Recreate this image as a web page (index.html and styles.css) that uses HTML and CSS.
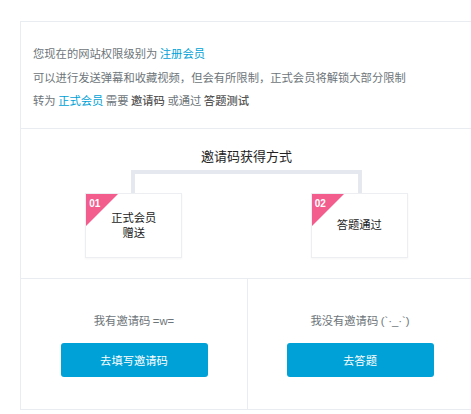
FILE: index.html
```html
<!DOCTYPE html>
<html lang="zh-CN">
<head>
<meta charset="utf-8">
<link rel="stylesheet" href="styles.css">
</head>
<body>
<div class="panel">
  <section class="intro">
    <p>您现在的网站权限级别为 <span class="link">注册会员</span></p>
    <p>可以进行发送弹幕和收藏视频，但会有所限制，正式会员将解锁大部分限制</p>
    <p>转为 <span class="link">正式会员</span> 需要 <b>邀请码</b> 或通过 <b>答题测试</b></p>
  </section>
  <section class="ways">
    <h2 class="title">邀请码获得方式</h2>
    <div class="connector"></div>
    <div class="way-row">
      <div class="way-cell">
        <div class="way-card"><span class="badge">01</span><span class="way-text">正式会员<br>赠送</span></div>
      </div>
      <div class="way-cell">
        <div class="way-card"><span class="badge">02</span><span class="way-text">答题通过</span></div>
      </div>
    </div>
  </section>
  <section class="actions">
    <div class="action">
      <p class="action-text">我有邀请码 <span class="latin">=w=</span></p>
      <a class="btn">去填写邀请码</a>
    </div>
    <div class="action">
      <p class="action-text">我没有邀请码 <span class="latin">(`·_·`)</span></p>
      <a class="btn">去答题</a>
    </div>
  </section>
</div>
</body>
</html>
```
FILE: styles.css
```css
html, body {
  margin: 0;
  padding: 0;
  overflow: hidden;
  background: #fff;
}
body {
  font-family: "Noto Sans CJK SC", "Liberation Sans", sans-serif;
  font-size: 11.3px;
  color: #6d757a;
}
.panel {
  margin: 21px 0 0 20px;
  width: 451px;
  border: 1px solid #e9ecf0;
}
.intro {
  padding: 20px 12px 15px;
  border-bottom: 1px solid #e9ecf0;
}
.intro p {
  margin: 0;
  line-height: 23.5px;
}
.link {
  color: #00a1d6;
}
.intro b {
  color: #555;
  font-weight: 500;
}
.ways {
  padding: 17px 0 20px;
  border-bottom: 1px solid #e9ecf0;
}
.title {
  margin: 0;
  text-align: center;
  font-size: 13px;
  font-weight: normal;
  color: #222;
  line-height: 20px;
  height: 24px;
}
.connector {
  margin-left: 110px;
  width: 223px;
  height: 19px;
  border: 4px solid #e5e9ef;
  border-bottom: 0;
}
.way-row {
  display: grid;
  grid-template-columns: 1fr 1fr;
}
.way-cell {
  display: flex;
  justify-content: center;
}
.way-card {
  position: relative;
  width: 95px;
  height: 63px;
  border: 1px solid #eceef1;
  box-shadow: 0 1px 2px rgba(0,0,0,0.04);
  background: #fff;
  display: flex;
  align-items: center;
  justify-content: center;
  text-align: center;
  overflow: hidden;
}
.way-card::before {
  content: "";
  position: absolute;
  left: -1px;
  top: -1px;
  border-top: 34px solid #f25d8e;
  border-right: 34px solid transparent;
}
.badge {
  position: absolute;
  left: 3px;
  top: 3px;
  font-family: "Liberation Sans", sans-serif;
  font-size: 10px;
  font-weight: bold;
  color: #fff;
  line-height: 14px;
}
.way-text {
  color: #222;
  line-height: 15.5px;
}
.actions {
  display: grid;
  grid-template-columns: 226px 1fr;
}
.action {
  padding: 32px 0 32px;
  display: flex;
  flex-direction: column;
  align-items: center;
}
.action + .action {
  border-left: 1px solid #e9ecf0;
}
.action-text {
  margin: 0 0 13px;
  line-height: 18px;
}
.latin {
  font-family: "Liberation Sans", sans-serif;
}
.btn {
  display: flex;
  align-items: center;
  justify-content: center;
  width: 147px;
  height: 34px;
  border-radius: 3px;
  background: #00a1d6;
  color: #fff;
}
```
